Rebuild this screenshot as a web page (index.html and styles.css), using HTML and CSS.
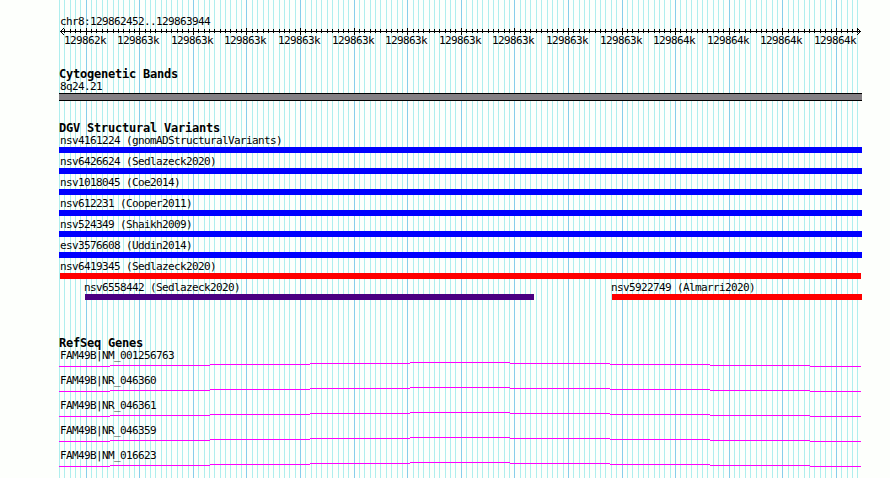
FILE: index.html
```html
<!DOCTYPE html>
<html lang="en">
<head>
<meta charset="utf-8">
<title>chr8:129862452..129863944</title>
<link rel="stylesheet" href="styles.css">
</head>
<body>
<svg class="grid" id="grid" width="890" height="478" shape-rendering="crispEdges"></svg>
<main class="tracks">
  <section class="overview">
    <div class="label">chr8:129862452..129863944</div>
    <svg class="ruler" id="ruler" width="803" height="21"></svg>
  </section>
  <section class="bands">
    <h2>Cytogenetic Bands</h2>
    <div class="label">8q24.21</div>
    <div class="band"></div>
  </section>
  <section class="variants">
    <h2>DGV Structural Variants</h2>
    <div class="row"><div class="variant"><div class="label">nsv4161224 (gnomADStructuralVariants)</div><div class="bar gain"></div></div></div>
    <div class="row"><div class="variant"><div class="label">nsv6426624 (Sedlazeck2020)</div><div class="bar gain"></div></div></div>
    <div class="row"><div class="variant"><div class="label">nsv1018045 (Coe2014)</div><div class="bar gain"></div></div></div>
    <div class="row"><div class="variant"><div class="label">nsv612231 (Cooper2011)</div><div class="bar gain"></div></div></div>
    <div class="row"><div class="variant"><div class="label">nsv524349 (Shaikh2009)</div><div class="bar gain"></div></div></div>
    <div class="row"><div class="variant"><div class="label">esv3576608 (Uddin2014)</div><div class="bar gain"></div></div></div>
    <div class="row"><div class="variant"><div class="label">nsv6419345 (Sedlazeck2020)</div><div class="bar loss inset"></div></div></div>
    <div class="row split">
      <div class="variant inversion-item"><div class="label">nsv6558442 (Sedlazeck2020)</div><div class="bar inversion"></div></div>
      <div class="variant loss-item"><div class="label">nsv5922749 (Almarri2020)</div><div class="bar loss"></div></div>
    </div>
  </section>
  <section class="genes" id="genes">
    <h2>RefSeq Genes</h2>
    <div class="gene"><div class="label">FAM49B|NM_001256763</div></div>
    <div class="gene"><div class="label">FAM49B|NR_046360</div></div>
    <div class="gene"><div class="label">FAM49B|NR_046361</div></div>
    <div class="gene"><div class="label">FAM49B|NR_046359</div></div>
    <div class="gene"><div class="label">FAM49B|NM_016623</div></div>
  </section>
</main>
<script src="tracks.js"></script>
</body>
</html>
```
FILE: styles.css
```css
body {
  margin: 0;
  width: 890px;
  height: 478px;
  overflow: hidden;
  background: #fdfffc;
  color: #000;
  font-family: "DejaVu Sans Mono", "Liberation Mono", monospace;
  font-size: 11px;
}

.grid {
  position: absolute;
  top: 0;
  left: 0;
  z-index: -1;
}

.minor { fill: #afeeee; }
.major { fill: #87ceeb; }

.tracks {
  width: 803px;
  padding: 15px 0 0 59px;
}

.label {
  height: 12px;
  padding-left: 1px;
  line-height: 14px;
  letter-spacing: -0.6226px;
  white-space: pre;
}

h2 {
  height: 12px;
  margin: 0;
  font-size: 12px;
  line-height: 12px;
  font-weight: bold;
  letter-spacing: -0.2246px;
  white-space: pre;
}

.ruler { display: block; }
.ruler text { letter-spacing: -0.6226px; }

.bands { margin-top: 20px; }

.band {
  box-sizing: border-box;
  height: 8px;
  margin-top: 1px;
  border: solid #000;
  border-width: 1px 0;
  background: #848084;
}

.variants { margin-top: 21px; }
.row { height: 21px; }
.split { display: flex; }
.bar { height: 6px; margin-top: 1px; }
.gain { background: #0000ff; }
.loss { background: #ff0000; }
.inversion { background: #4b0082; }
.inset { margin-left: 1px; margin-right: 1px; }
.inversion-item { width: 449px; margin-left: 26px; }
.loss-item { width: 250px; margin-left: 78px; }
.split .label { padding-left: 0; margin-left: -1px; }

.genes { margin-top: 35px; }
.gene { height: 25px; }
.intron { display: block; fill: #ff00ff; }
```
FILE: tracks.js
```js
const SCALE = 800 / 1493;
const START = 129862452;

const rect = (x, y, w, h, cls = "") =>
  `<rect class="${cls}" x="${x}" y="${y}" width="${w}" height="${h}"/>`;

let minor = "", major = "", ruler = "", labels = "";

for (let bp = 129862450; bp <= 129863940; bp += 10) {
  const x = Math.round(60 + (bp - START) * SCALE);
  const isMajor = bp % 100 === 0;
  if (isMajor) {
    major += rect(x, 0, 1, 478, "major");
    ruler += rect(x - 59, 1, 1, 7);
    labels += `<text x="${x - 59 - 22}" y="17">${Math.round(bp / 1000 - 0.001)}k</text>`;
  } else {
    minor += rect(x, 0, 1, 478, "minor");
    if (x > 60) ruler += rect(x - 59, 2, 1, 4);
  }
}

document.getElementById("grid").innerHTML = minor + major;
document.getElementById("ruler").innerHTML =
  `<g shape-rendering="crispEdges">${rect(1, 4, 801, 1)}${ruler}` +
  [1, 2, 3].map(i =>
    rect(1 + i, 4 - i, 1, 1) + rect(1 + i, 4 + i, 1, 1) +
    rect(801 - i, 4 - i, 1, 1) + rect(801 - i, 4 + i, 1, 1)).join("") +
  `</g>${labels}`;

// Intron lines rise one pixel per hundred to the middle, then fall again.
const edges = [0, 51, 151, 251, 351, 451, 551, 651, 751, 802];
const steps = edges.slice(1).map((end, i) =>
  rect(edges[i], 1 + Math.abs(i - 4), end - edges[i], 1)).join("");

document.querySelectorAll(".gene").forEach(gene => {
  gene.insertAdjacentHTML("beforeend",
    `<svg class="intron" width="803" height="7" shape-rendering="crispEdges">${steps}</svg>`);
});
```
